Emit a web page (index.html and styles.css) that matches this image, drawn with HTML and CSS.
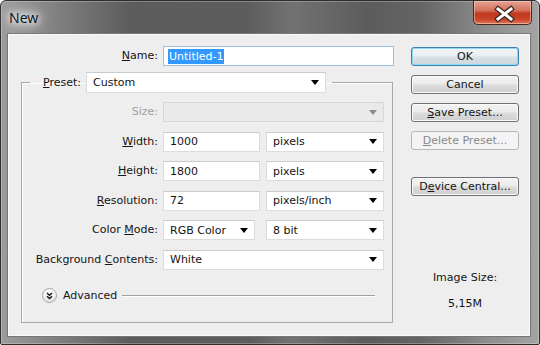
FILE: index.html
```html
<!DOCTYPE html>
<html lang="en">
<head>
  <meta charset="UTF-8">
  <title>New</title>
  <link rel="stylesheet" href="styles.css">
</head>
<body>
  <div class="window">
    <div class="titlebar">
      <span class="title">New</span>
      <button class="close" aria-label="Close">
        <svg width="59" height="24" viewBox="0 0 59 24">
          <path d="M24 8 L37 18 M37 8 L24 18" stroke="#3b2a28" stroke-width="5.5" stroke-linecap="square" fill="none"/>
          <path d="M24 8 L37 18 M37 8 L24 18" stroke="#ffffff" stroke-width="3" stroke-linecap="square" fill="none"/>
        </svg>
      </button>
    </div>

    <div class="content">
      <div class="form">
        <div class="name-row">
          <label class="lbl name-lbl"><u>N</u>ame:</label>
          <div class="field name-field"><span class="sel">Untitled-1</span></div>
        </div>

        <fieldset class="group">
          <legend class="preset">
            <label class="lbl"><u>P</u>reset:</label>
            <div class="combo preset-combo"><span>Custom</span><i class="arrow"></i></div>
          </legend>

          <div class="rows">
            <label class="lbl disabled">Size:</label>
            <div class="fields"><div class="combo full disabled"><span></span><i class="arrow"></i></div></div>

            <label class="lbl"><u>W</u>idth:</label>
            <div class="fields">
              <div class="field num">1000</div>
              <div class="combo unit"><span>pixels</span><i class="arrow"></i></div>
            </div>

            <label class="lbl"><u>H</u>eight:</label>
            <div class="fields">
              <div class="field num">1800</div>
              <div class="combo unit"><span>pixels</span><i class="arrow"></i></div>
            </div>

            <label class="lbl"><u>R</u>esolution:</label>
            <div class="fields">
              <div class="field num">72</div>
              <div class="combo unit"><span>pixels/inch</span><i class="arrow"></i></div>
            </div>

            <label class="lbl">Color <u>M</u>ode:</label>
            <div class="fields">
              <div class="combo mode"><span>RGB Color</span><i class="arrow"></i></div>
              <div class="combo unit"><span>8 bit</span><i class="arrow"></i></div>
            </div>

            <label class="lbl">Background <u>C</u>ontents:</label>
            <div class="fields"><div class="combo full"><span>White</span><i class="arrow"></i></div></div>
          </div>

          <div class="advanced">
            <svg class="adv-icon" width="15" height="15" viewBox="0 0 15 15">
              <defs>
                <linearGradient id="advbg" x1="0" y1="0" x2="0" y2="1">
                  <stop offset="0" stop-color="#ffffff"/>
                  <stop offset="1" stop-color="#e2e2e2"/>
                </linearGradient>
              </defs>
              <circle cx="7.5" cy="7.5" r="7" fill="url(#advbg)" stroke="#a4a4a4"/>
              <path d="M5 5 L7.5 7.3 L10 5 M5 8.2 L7.5 10.5 L10 8.2" stroke="#1a1a1a" stroke-width="1.4" fill="none"/>
            </svg>
            <span>Advanced</span>
            <div class="rule"></div>
          </div>
        </fieldset>
      </div>

      <div class="side">
        <button class="btn default">OK</button>
        <button class="btn">Cancel</button>
        <button class="btn"><u>S</u>ave Preset...</button>
        <button class="btn" disabled><u>D</u>elete Preset...</button>
        <button class="btn device">D<u>e</u>vice Central...</button>
        <div class="image-size">
          <div>Image Size:</div>
          <div class="size-value">5,15M</div>
        </div>
      </div>
    </div>
  </div>
</body>
</html>
```

FILE: styles.css
```css
* {
  box-sizing: border-box;
}

body {
  margin: 0;
  font-family: "DejaVu Sans", sans-serif;
  font-size: 11px;
  color: #141414;
  background: #ffffff;
}

u {
  text-decoration: underline;
  text-underline-offset: 1px;
}

.window {
  width: 540px;
  height: 345px;
  display: flex;
  flex-direction: column;
  padding: 0 9px 8px 7px;
  border: 1px solid #2e2e2e;
  border-radius: 6px 6px 2px 2px;
  background: linear-gradient(90deg, #9c9c9c 0%, #7c7c7c 12%, #5c5c5c 24%, #5d5d5d 46%, #727272 54%, #5c5c5c 68%, #646464 78%, #8c8c8c 90%, #a4a4a4 100%);
  box-shadow: inset 0 0 0 1px rgba(255, 255, 255, 0.25);
}

/* barra de titulo */
.titlebar {
  height: 33px;
  display: flex;
  justify-content: space-between;
  align-items: flex-start;
}

.title {
  margin: 8px 0 0 1px;
  padding: 0 6px 0 0;
  font-family: "Noto Sans", sans-serif;
  font-size: 14px;
  line-height: 17px;
  color: #0e1a26;
  text-shadow: 0 0 6px #ffffff, 0 0 10px #ffffff, 0 0 16px #ffffff, 0 0 22px #e8e8e8;
}

.close {
  width: 59px;
  height: 24px;
  margin-right: -2px;
  padding: 0;
  border: 1px solid #4a2620;
  border-top: none;
  border-radius: 0 0 5px 5px;
  background: linear-gradient(#e6a293 0%, #d4735f 40%, #c2371f 55%, #c9452a 80%, #de7a5b 100%);
  box-shadow: inset 0 0 0 1px rgba(255, 220, 210, 0.5);
}

.close svg {
  display: block;
}

/* area del dialogo */
.content {
  flex: 1;
  display: flex;
  background: #eeeeee;
  border: 1px solid #fafafa;
  box-shadow: 0 0 0 1px #777777;
}

.form {
  width: 385px;
  padding: 11px 0 0 12px;
}

.lbl {
  text-align: right;
  line-height: 20px;
  white-space: nowrap;
}

.lbl.disabled {
  color: #a2a2a2;
}

.name-row {
  display: flex;
  gap: 5px;
}

.name-lbl {
  width: 137px;
}

.field,
.combo {
  height: 20px;
  display: flex;
  align-items: center;
  padding-left: 6px;
  background: #ffffff;
  border: 1px solid #dcdcdc;
  border-top-color: #cbcbcb;
  white-space: nowrap;
}

.name-field {
  width: 231px;
  padding-left: 4px;
  border-color: #9cbfe2;
}

.sel {
  background: #3399ff;
  color: #ffffff;
  padding: 0 1px;
  line-height: 15px;
}

.combo span {
  flex: 1;
}

.arrow {
  width: 0;
  height: 0;
  margin-right: 6px;
  border-left: 4.5px solid transparent;
  border-right: 4.5px solid transparent;
  border-top: 5px solid #000000;
}

.combo.disabled {
  background: #eaeaea;
  border-color: #d6d6d6;
}

.combo.disabled .arrow {
  border-top-color: #8c8c8c;
}

/* grupo preset */
.group {
  width: 372px;
  min-width: 0;
  margin: 6px 0 0 0;
  padding: 9px 8px 19px 0;
  border: 1px solid #a8a8a8;
  box-shadow: inset 1px 1px 0 #ffffff;
}

.preset {
  display: flex;
  align-items: center;
  gap: 5px;
  margin-left: 8px;
  padding: 0 6px 0 13px;
}

.preset-combo {
  width: 240px;
  height: 21px;
}

.rows {
  display: grid;
  grid-template-columns: 136px 1fr;
  column-gap: 5px;
  row-gap: 9.5px;
}

.fields {
  display: flex;
}

.combo.full {
  width: 100%;
}

.field.num {
  width: 97px;
}

.combo.mode {
  width: 92px;
}

.combo.unit {
  width: 118px;
  margin-left: auto;
}

.advanced {
  height: 16px;
  margin: 17.5px 0 0 20px;
  display: flex;
  align-items: center;
  gap: 6px;
}

.adv-icon {
  display: block;
}

.rule {
  flex: 1;
  height: 1px;
  margin: 0 9px 0 -1px;
  background: #a0a0a0;
  box-shadow: 0 1px 0 #ffffff;
}

/* botones */
.side {
  width: 108px;
  margin-left: 17px;
  padding-top: 12px;
  display: flex;
  flex-direction: column;
  gap: 9px;
}

.btn {
  height: 19px;
  padding: 0;
  font-family: "DejaVu Sans", sans-serif;
  font-size: 11px;
  color: #141414;
  border: 1px solid #707070;
  border-radius: 3px;
  background: linear-gradient(#f3f3f3 0%, #ebebeb 48%, #dcdcdc 52%, #cfcfcf 100%);
  box-shadow: inset 0 0 0 1px #fbfbfb;
}

.btn.default {
  border-color: #3c7fb1;
  box-shadow: inset 0 0 0 1px #8fd8f6;
  background: linear-gradient(#f2f5f7 0%, #e9eef1 48%, #dae1e6 52%, #ccd6dc 100%);
}

.btn:disabled {
  color: #8a8a8a;
  border-color: #b4b8ba;
  background: #f4f4f4;
  box-shadow: none;
}

.btn.device {
  margin-top: 18px;
}

.image-size {
  margin-top: 66px;
  text-align: center;
  line-height: 14px;
}

.size-value {
  margin-top: 12px;
}
```
